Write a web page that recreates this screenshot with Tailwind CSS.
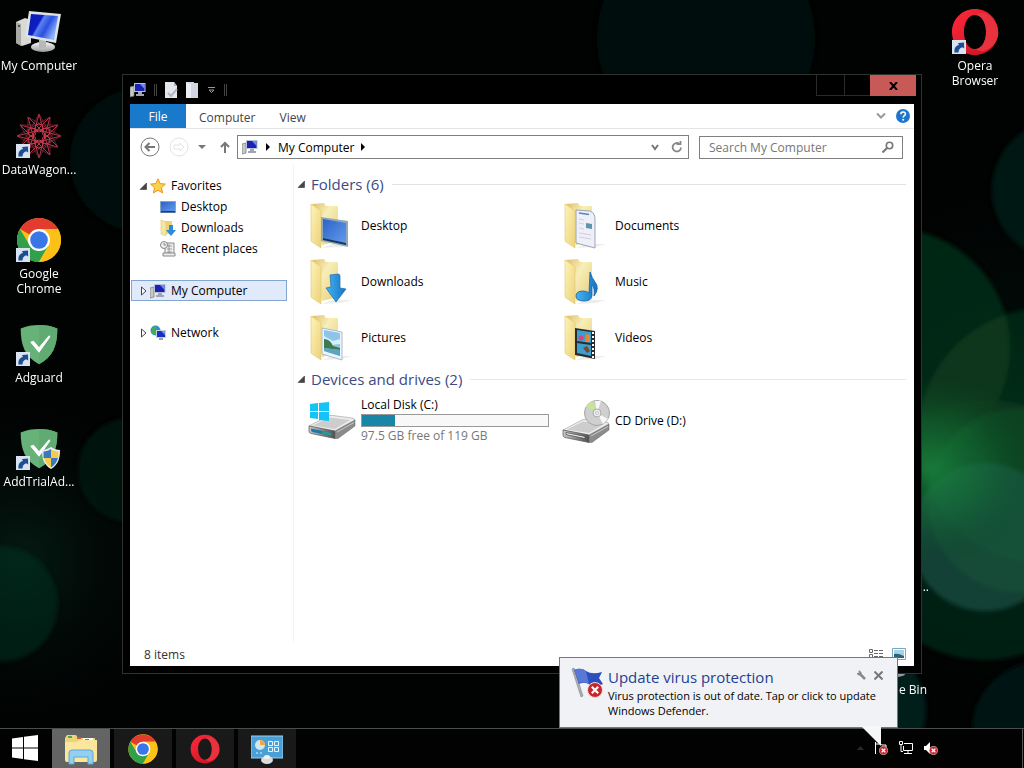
<!DOCTYPE html>
<html lang="en">
  <head>
    <meta charset="UTF-8" />
    <meta name="viewport" content="width=device-width, initial-scale=1.0" />
    <title>My Computer</title>
    <script src="https://cdn.jsdelivr.net/npm/@tailwindcss/browser@4"></script>
  </head>
  <body
    class="flex h-screen flex-col overflow-hidden bg-black font-['Open_Sans','Noto_Sans',sans-serif] text-[12px] leading-[15px] text-black"
  >
    <!-- Shared icons -->
    <svg class="absolute h-0 w-0" aria-hidden="true">
      <defs>
        <linearGradient id="g-screen" x1="0" y1="0" x2="1" y2=".5">
          <stop offset="0" stop-color="#0a1cae" />
          <stop offset=".42" stop-color="#0d1fc4" />
          <stop offset=".48" stop-color="#5b82f0" />
          <stop offset=".7" stop-color="#2a50e0" />
          <stop offset="1" stop-color="#8fb4fb" />
        </linearGradient>
        <linearGradient id="g-metal" x1="0" y1="0" x2="0" y2="1">
          <stop offset="0" stop-color="#f6f6f6" />
          <stop offset="1" stop-color="#9b9b9b" />
        </linearGradient>
        <linearGradient id="g-front" x1="0" y1="0" x2="1" y2="0">
          <stop offset="0" stop-color="#c9c9c9" />
          <stop offset=".6" stop-color="#7d7d7d" />
          <stop offset="1" stop-color="#4f4f4f" />
        </linearGradient>
        <linearGradient id="g-folder" x1="0" y1="0" x2="1" y2="1">
          <stop offset="0" stop-color="#fdf3b8" />
          <stop offset="1" stop-color="#ecd27a" />
        </linearGradient>
        <linearGradient id="g-back" x1="0" y1="0" x2="1" y2="1">
          <stop offset="0" stop-color="#dcc06c" />
          <stop offset=".4" stop-color="#f8eeb8" />
          <stop offset="1" stop-color="#e6cd78" />
        </linearGradient>
        <linearGradient id="g-blue" x1="0" y1="0" x2="1" y2="1">
          <stop offset="0" stop-color="#2f62c4" />
          <stop offset="1" stop-color="#5f9bee" />
        </linearGradient>
        <linearGradient id="g-arrow" x1="0" y1="0" x2="1" y2="0">
          <stop offset="0" stop-color="#45b4f2" />
          <stop offset="1" stop-color="#1573c4" />
        </linearGradient>
        <linearGradient id="g-opera" x1="0" y1="0" x2="1" y2="1">
          <stop offset="0" stop-color="#ff2a3c" />
          <stop offset="1" stop-color="#c3101f" />
        </linearGradient>
      </defs>
      <symbol id="i-pc" viewBox="0 0 48 48">
        <path d="M1 14l9-4 6 2v23l-9 3-6-3z" fill="#d9d9d6" />
        <path d="M1 14l5 2v22l-5-3z" fill="#a8a8a4" />
        <circle cx="4" cy="18" r="1" fill="#333" />
        <ellipse cx="28" cy="39" rx="12" ry="5" fill="url(#g-metal)" />
        <path d="M24 32h7v8h-7z" fill="#b8b8b8" />
        <path d="M14 3l32 3-5 29-31-6z" fill="#dfe3e8" />
        <path d="M16 6l27 2-4 24-26-5z" fill="url(#g-screen)" />
      </symbol>
      <symbol id="i-pc-sm" viewBox="0 0 16 16">
        <path d="M0 5l4-1v10l-4 1z" fill="#c6c9c4" stroke="#777" stroke-width=".7" />
        <path d="M4 1h11.500v9H4z" fill="#b9c1d6" />
        <path d="M5 2h9.500v7H5z" fill="#1a22b4" />
        <path d="M10 2h4.500v5z" fill="#6f8df0" />
        <path d="M8 10h4v2h2v2H6v-2h2z" fill="#9fa6b2" />
      </symbol>
      <symbol id="i-chrome" viewBox="0 0 48 48">
        <circle cx="24" cy="24" r="22" fill="#fbc116" />
        <path d="M24 24L5 13a22 22 0 0 1 38 0H24z" fill="#e33b2e" />
        <path d="M5 13l10 17 9.500 5-7 0L24 46A22 22 0 0 1 5 13z" fill="#31a04a" />
        <path d="M33.500 29.500L24 46 17 44l0-12z" fill="#31a04a" />
        <path d="M24 13h19a22 22 0 0 1-19 33l9.500-16.500z" fill="#fbc116" />
        <circle cx="24" cy="24" r="11" fill="#fff" />
        <circle cx="24" cy="24" r="8.800" fill="#3b76e8" />
      </symbol>
      <symbol id="i-opera" viewBox="0 0 48 48">
        <path
          fill-rule="evenodd"
          d="M24 1c13 0 23 10 23 23S37 47 24 47 1 37 1 24 11 1 24 1zm0 6c-7 0-11 8-11 17s4 17 11 17 11-8 11-17S31 7 24 7z"
          fill="url(#g-opera)"
        />
        <path d="M24 7c5-3 10-3 15 1 11 9 11 24 0 32-5 4-10 4-15 1 7 0 11-8 11-17S31 7 24 7z" fill="#e8323e" />
      </symbol>
      <symbol id="i-shield" viewBox="0 0 48 48">
        <path d="M4 7c12-5 28-5 40 0 0 19-5 31-20 39C9 38 4 26 4 7z" fill="#67b279" />
        <path d="M24 3.300c7 0 14 1.300 20 3.700 0 19-5 31-20 39z" fill="#5fab71" />
        <path d="M15 22l3-1 6 7 11-13 1 1-12 17z" fill="#fff" stroke="#fff" />
      </symbol>
      <symbol id="i-uac" viewBox="0 0 20 24">
        <path d="M10 1c3 2 6 3 9 3 0 9-2 15-9 19C3 19 1 13 1 4c3 0 6-1 9-3z" fill="#e8eef6" />
        <path d="M10 3v9H2.500V5.500C5 5.500 8 4.500 10 3zM10 12h7c-1 4-3 7-7 9.500z" fill="#3d78bd" />
        <path d="M10 3v9h7.500V5.500C15 5.500 12 4.500 10 3zM10 12H3c1 4 3 7 7 9.500z" fill="#f5cb4e" />
      </symbol>
      <symbol id="i-shortcut" viewBox="0 0 14 14">
        <path d="M0 0h14v14H0z" fill="#d9e3f1" />
        <path d="M2.500 12.500C2 8 4 5.500 7 5L6 3l6-.5.200 6-2-1.300C8 8 6.500 9.500 6.500 12.500z" fill="#1b4e92" />
      </symbol>
      <symbol id="i-folder" viewBox="0 0 48 48">
        <path d="M24 43l20 0-10 3-20 1z" fill="#000" opacity=".07" />
        <path d="M4 3l12-1 2 3 12 0v35l-16 4z" fill="url(#g-back)" />
        <path d="M3 3l9 6c1 .6 1 1 1 2v36L4 41c-1-.6-1-1-1-2z" fill="url(#g-folder)" stroke="#e2c86c" stroke-width=".6" />
      </symbol>
      <symbol id="i-tri-open" viewBox="0 0 8 8">
        <path d="M7.500 1v6.500H1z" fill="#444" stroke="#222" stroke-width=".5" />
      </symbol>
      <symbol id="i-tri-closed" viewBox="0 0 8 10">
        <path d="M1.500 1l4.500 4-4.500 4z" fill="#fff" stroke="#444" />
      </symbol>
      <symbol id="i-error" viewBox="0 0 16 16">
        <circle cx="8" cy="8" r="7.500" fill="#c9262c" stroke="#f3d9d9" />
        <path d="M4.800 4.800l6.400 6.400M11.200 4.800l-6.400 6.400" stroke="#fff" stroke-width="2.200" />
      </symbol>
      <symbol id="i-drive" viewBox="0 0 48 26">
        <path d="M1 13L20 3q2-1 5-.5l19 2.500q3 .5 3 2.500L27 19z" fill="#ececec" stroke="#9a9a9a" stroke-width=".6" />
        <path d="M5 12.500L21 4.500l21 2.500-15 9z" fill="#cdcdcd" />
        <path d="M1 13l26 5v7.500L3 20.500q-2-.5-2-2.500z" fill="url(#g-front)" stroke="#555" stroke-width=".7" />
        <path d="M27 18L47 7v6L30 25.500h-3z" fill="#8b8b8b" stroke="#666" stroke-width=".5" />
        <path d="M29 19l17-9.500" stroke="#c9c9c9" />
      </symbol>
    </svg>

    <main class="relative flex flex-1 items-start justify-between">
      <!-- Wallpaper -->
      <svg
        class="absolute inset-0 h-full w-full"
        viewBox="0 0 1024 728"
        preserveAspectRatio="xMidYMid slice"
        aria-hidden="true"
      >
        <defs>
          <radialGradient id="glow">
            <stop offset="0" stop-color="#1c8a42" stop-opacity=".8" />
            <stop offset=".5" stop-color="#167a3a" stop-opacity=".4" />
            <stop offset="1" stop-color="#0c4a25" stop-opacity="0" />
          </radialGradient>
          <radialGradient id="haze">
            <stop offset="0" stop-color="#052619" stop-opacity=".7" />
            <stop offset="1" stop-color="#010504" stop-opacity="0" />
          </radialGradient>
          <filter id="soft"><feGaussianBlur stdDeviation="2" /></filter>
        </defs>
        <path d="M0 0h1024v728H0z" fill="#010303" />
        <ellipse cx="20" cy="560" rx="170" ry="170" fill="url(#haze)" />
        <ellipse cx="1010" cy="440" rx="240" ry="270" fill="url(#haze)" />
        <g filter="url(#soft)">
          <circle cx="706" cy="38" r="109" fill="#020e08" />
          <circle cx="142" cy="160" r="72" fill="#031007" />
          <circle cx="130" cy="470" r="52" fill="#031a0e" opacity=".6" />
          <circle cx="0" cy="604" r="58" fill="#083322" opacity=".5" />
          <circle cx="1062" cy="190" r="70" fill="#06281a" opacity=".6" />
          <circle cx="985" cy="530" r="130" fill="#093222" opacity=".6" />
          <circle cx="890" cy="348" r="120" fill="#07301d" opacity=".8" />
          <circle cx="1046" cy="436" r="128" fill="#0e4824" opacity=".45" />
          <circle cx="1020" cy="500" r="92" fill="#11602f" opacity=".35" />
          <circle cx="985" cy="537" r="74" fill="#1b5f4e" opacity=".55" />
          <circle cx="1040" cy="730" r="68" fill="#04151b" opacity=".8" />
          <circle cx="860" cy="710" r="66" fill="#05241f" opacity=".8" />
        </g>
        <ellipse cx="930" cy="468" rx="110" ry="95" fill="url(#glow)" />
      </svg>

      <ul class="relative text-center text-white">
        <li class="h-[104px] w-[78px]">
          <a href="#" class="flex flex-col items-center gap-[2px] pt-2">
            <svg class="h-12 w-12"><use href="#i-pc" /></svg>
            My Computer
          </a>
        </li>
        <li class="h-[104px] w-[78px]">
          <a href="#" class="flex flex-col items-center gap-[2px] pt-2">
            <span class="relative">
              <svg class="h-12 w-12" viewBox="0 0 48 48" fill="none" stroke="#b83448">
                <path d="M46 24L5 35 35 5 24 46 13 5 43 35 2 24 43 13 13 43 24 2 35 43 5 13z" />
                <path d="M46 24L13 43V5zM35 43L2 24 35 5zM24 46L5 13h38zM24 2l19 33H5z" stroke="#93283a" stroke-width=".7" />
                <g stroke="#c93a4e" stroke-width=".9">
                  <circle cx="24" cy="16" r="4" />
                  <circle cx="31" cy="20" r="4" />
                  <circle cx="31" cy="28" r="4" />
                  <circle cx="24" cy="32" r="4" />
                  <circle cx="17" cy="28" r="4" />
                  <circle cx="17" cy="20" r="4" />
                </g>
              </svg>
              <svg class="absolute bottom-[2px] left-px h-[14px] w-[14px]"><use href="#i-shortcut" /></svg>
            </span>
            DataWagon...
          </a>
        </li>
        <li class="h-[104px] w-[78px]">
          <a href="#" class="flex flex-col items-center gap-[2px] pt-2">
            <span class="relative">
              <svg class="h-12 w-12"><use href="#i-chrome" /></svg>
              <svg class="absolute bottom-[2px] left-px h-[14px] w-[14px]"><use href="#i-shortcut" /></svg>
            </span>
            <span>Google<br />Chrome</span>
          </a>
        </li>
        <li class="h-[104px] w-[78px]">
          <a href="#" class="flex flex-col items-center gap-[2px] pt-2">
            <span class="relative">
              <svg class="h-12 w-12 p-[2px]"><use href="#i-shield" /></svg>
              <svg class="absolute bottom-[2px] left-px h-[14px] w-[14px]"><use href="#i-shortcut" /></svg>
            </span>
            Adguard
          </a>
        </li>
        <li class="h-[104px] w-[78px]">
          <a href="#" class="flex flex-col items-center gap-[2px] pt-2">
            <span class="relative">
              <svg class="h-12 w-12 p-[2px]"><use href="#i-shield" /></svg>
              <svg class="absolute bottom-[2px] left-px h-[14px] w-[14px]"><use href="#i-shortcut" /></svg>
              <svg class="absolute right-[2px] bottom-[2px] h-6 w-5"><use href="#i-uac" /></svg>
            </span>
            AddTrialAd...
          </a>
        </li>
      </ul>

      <a href="#" class="relative mr-[10px] flex w-[78px] flex-col items-center gap-[2px] pt-2 text-center text-white">
        <span class="relative">
          <svg class="h-12 w-12"><use href="#i-opera" /></svg>
          <svg class="absolute bottom-[2px] left-px h-[14px] w-[14px]"><use href="#i-shortcut" /></svg>
        </span>
        <span>Opera<br />Browser</span>
      </a>

      <!-- Icons partly behind the window -->
      <span class="absolute right-[95px] bottom-[134px] text-white">..</span>
      <a href="#" class="absolute right-[97px] bottom-[31px] flex flex-col items-center gap-[2px] text-white">
        <svg class="h-12 w-12" viewBox="0 0 48 48">
          <path d="M10 6l28-2-5 38q-9 5-18 0z" fill="#6d777c" />
          <ellipse cx="24" cy="42" rx="9" ry="3" fill="#8f989c" />
        </svg>
        Recycle Bin
      </a>

      <!-- Explorer window -->
      <section
        class="absolute top-[74px] right-[102px] bottom-[54px] left-[122px] flex flex-col border border-[#2e332f] bg-black px-[7px] pb-[7px]"
      >
        <header class="flex h-[29px] items-start">
          <div class="flex h-[29px] items-center gap-2">
            <svg class="h-4 w-4"><use href="#i-pc-sm" /></svg>
            <span class="h-3 w-[3px] border-x border-[#444]"></span>
            <button aria-label="Properties" class="-ml-[2px]">
              <svg class="h-4 w-4" viewBox="0 0 16 16">
                <path d="M2 0h9l3 4v12H2z" fill="#e4e6ee" />
                <path d="M11 0v4h3z" fill="#aeb3c2" />
                <path d="M5 11l3 3 6-7" fill="none" stroke="#b3b7c4" stroke-width="2" />
              </svg>
            </button>
            <button aria-label="New folder" class="-ml-[3px]">
              <svg class="h-4 w-4" viewBox="0 0 16 16">
                <path d="M2 0h8v1h4v15H2z" fill="#d3d6e2" />
                <path d="M2 0l5 2v14H2z" fill="#eceef5" />
              </svg>
            </button>
            <button aria-label="Customize Quick Access Toolbar">
              <svg class="h-2 w-2" viewBox="0 0 8 8" fill="none" stroke="#999">
                <path d="M0 1.500h7M1 4l2.500 2.500L6 4z" />
              </svg>
            </button>
            <span class="h-3 w-[3px] border-x border-[#444]"></span>
          </div>
          <div class="-mr-[2px] ml-auto flex h-[21px]">
            <button aria-label="Minimize" class="w-[28px] border-b border-l border-[#2a2a2a]"></button>
            <button aria-label="Maximize" class="w-[26px] border-b border-l border-[#2a2a2a]"></button>
            <button aria-label="Close" class="flex w-[46px] items-center justify-center bg-[#c75a56]">
              <svg class="h-2 w-[9px]" viewBox="0 0 9 8" stroke="#000" stroke-width="2">
                <path d="M1 0l7 8M8 0L1 8" />
              </svg>
            </button>
          </div>
        </header>

        <div class="flex min-h-0 flex-1 flex-col bg-white">
          <div class="flex h-[25px] border-b border-[#e3e4e6] text-[#444]">
            <button class="w-14 bg-[#1979ca] text-white">File</button>
            <button class="px-[13px] pt-[2px]">Computer</button>
            <button class="px-[11px] pt-[2px]">View</button>
            <button aria-label="Expand ribbon" class="ml-auto">
              <svg class="h-2 w-[10px]" viewBox="0 0 10 8" fill="none" stroke="#999" stroke-width="2">
                <path d="M1 1.500l4 4 4-4" />
              </svg>
            </button>
            <button aria-label="Help" class="mr-1 ml-[10px]">
              <svg class="h-[14px] w-[14px]" viewBox="0 0 14 14">
                <circle cx="7" cy="7" r="7" fill="#1d76cc" />
                <path d="M4.800 5.300c0-3 4.600-3 4.600-.4 0 1.800-2.200 1.700-2.200 3.500" fill="none" stroke="#fff" stroke-width="1.600" />
                <circle cx="7.200" cy="10.800" r="1" fill="#fff" />
              </svg>
            </button>
          </div>

          <div class="flex h-9 items-center pr-[11px] pl-[10px]">
            <button aria-label="Back">
              <svg class="h-5 w-5" viewBox="0 0 20 20" fill="none" stroke="#777">
                <circle cx="10" cy="10" r="9" />
                <path d="M15 10H6M9.500 6L5.500 10l4 4" stroke-width="2" />
              </svg>
            </button>
            <button aria-label="Forward" class="ml-[9px]">
              <svg class="h-5 w-5" viewBox="0 0 20 20" fill="none" stroke="#e4e4e4">
                <circle cx="10" cy="10" r="9" />
                <path d="M5 8h6V6l4 4-4 4v-2H5z" />
              </svg>
            </button>
            <button aria-label="Recent locations" class="ml-[9px]">
              <svg class="h-1 w-2" viewBox="0 0 8 4"><path d="M0 0h8L4 4z" fill="#777" /></svg>
            </button>
            <button aria-label="Up" class="ml-[14px]">
              <svg class="h-3 w-[10px]" viewBox="0 0 10 12" fill="none" stroke="#777" stroke-width="2">
                <path d="M5 12V2M1 6l4-4 4 4" />
              </svg>
            </button>
            <nav class="ml-[7px] flex h-6 flex-1 items-center border border-[#808080] px-[4px]">
              <svg class="h-4 w-4"><use href="#i-pc-sm" /></svg>
              <svg class="ml-2 h-2 w-1" viewBox="0 0 4 8"><path d="M0 0l4 4-4 4z" /></svg>
              <a href="#" class="ml-2">My Computer</a>
              <svg class="ml-[7px] h-2 w-1" viewBox="0 0 4 8"><path d="M0 0l4 4-4 4z" /></svg>
              <button aria-label="Previous locations" class="ml-auto">
                <svg class="h-2 w-2" viewBox="0 0 8 8" fill="none" stroke="#777" stroke-width="2">
                  <path d="M1 2l3 4 3-4" />
                </svg>
              </button>
              <button aria-label="Refresh" class="mr-px ml-3">
                <svg class="h-3 w-3" viewBox="0 0 12 12" fill="none" stroke="#888" stroke-width="1.800">
                  <path d="M8.500 3A4.200 4.200 0 1 0 10 6.500" />
                  <path d="M5.500 3h4V0" />
                </svg>
              </button>
            </nav>
            <label class="ml-[10px] flex h-[23px] w-[204px] items-center border border-[#808080] pr-2 pl-[9px]">
              <input
                type="text"
                aria-label="Search My Computer"
                placeholder="Search My Computer"
                class="min-w-0 flex-1 outline-none placeholder:text-[#777]"
              />
              <svg class="h-3 w-3" viewBox="0 0 12 12" fill="none" stroke="#777">
                <circle cx="7.500" cy="4.500" r="3.200" stroke-width="1.600" />
                <path d="M5 7l-4.500 4.500" stroke-width="2" />
              </svg>
            </label>
          </div>

          <div class="flex min-h-0 flex-1">
            <nav class="w-[164px] border-r border-[#f3f3f3] pt-[10px]">
              <ul class="pr-[6px] pl-px">
                <li class="flex h-[21px] items-center pl-2">
                  <svg class="h-2 w-2"><use href="#i-tri-open" /></svg>
                  <svg class="ml-[3px] h-4 w-4" viewBox="0 0 16 16">
                    <path
                      d="M8 .8l2.100 4.800 5.300.5-4 3.500 1.200 5.300L8 12.200l-4.600 2.700 1.200-5.300-4-3.500 5.300-.5z"
                      fill="#fbd24c"
                      stroke="#ef9418"
                    />
                  </svg>
                  <a href="#" class="ml-[5px]">Favorites</a>
                </li>
                <li class="flex h-[21px] items-center pl-[29px]">
                  <svg class="h-4 w-4" viewBox="0 0 16 16">
                    <path d="M0 2h16v12H0z" fill="#88a4cc" />
                    <path d="M1 3h14v9H1z" fill="url(#g-blue)" />
                    <path d="M1 12h14v1.500H1z" fill="#1f3c6e" />
                  </svg>
                  <a href="#" class="ml-[5px]">Desktop</a>
                </li>
                <li class="flex h-[21px] items-center pl-[29px]">
                  <svg class="h-4 w-4" viewBox="0 0 16 16">
                    <path d="M1 1h11v13H1z" fill="#ecd27c" />
                    <path d="M1 0l5 2v14l-5-2z" fill="#f7e6a0" stroke="#d8b95c" stroke-width=".5" />
                    <path d="M9 5h4v5h3l-5 6-5-6h3z" fill="#2b8bd6" />
                  </svg>
                  <a href="#" class="ml-[5px]">Downloads</a>
                </li>
                <li class="flex h-[21px] items-center pl-[29px]">
                  <svg class="h-4 w-4" viewBox="0 0 16 16" fill="#eee" stroke="#888">
                    <path d="M5 2h9v12H5z" />
                    <path d="M7 5h5M7 8h5M7 11h5M9 3v10" stroke-width=".8" />
                    <path d="M3 12h12v3H3z" />
                    <circle cx="4" cy="4" r="3.500" />
                    <path d="M4 2v2h2" />
                  </svg>
                  <a href="#" class="ml-[5px]">Recent places</a>
                </li>
                <li class="mt-[21px] flex h-[21px] items-center border border-[#84a5d0] bg-[#e0eafa] pl-2">
                  <svg class="h-[10px] w-2"><use href="#i-tri-closed" /></svg>
                  <svg class="ml-[2px] h-4 w-4"><use href="#i-pc-sm" /></svg>
                  <a href="#" class="ml-[5px]">My Computer</a>
                </li>
                <li class="mt-[21px] flex h-[21px] items-center pl-[9px]">
                  <svg class="h-[10px] w-2"><use href="#i-tri-closed" /></svg>
                  <svg class="ml-[2px] h-4 w-4" viewBox="0 0 16 16">
                    <circle cx="5.500" cy="5.500" r="5" fill="#2f8ed8" />
                    <path d="M2 3q3-3 5-1L5 5l2 3-3 2-3-3z" fill="#3fae5a" />
                    <path d="M6 5h10v8H6z" fill="#c6cfdf" />
                    <path d="M7 6h8v6H7z" fill="#1a2fc0" />
                    <path d="M11 6h4v4z" fill="#7094f0" />
                    <path d="M9 13h4v2H9z" fill="#98a2b0" />
                  </svg>
                  <a href="#" class="ml-[5px]">Network</a>
                </li>
              </ul>
            </nav>

            <div class="min-w-0 flex-1 pt-[7px] pr-2 pl-[3px]">
              <h2 class="flex h-6 items-center text-[15px] text-[#3c4a86]">
                <svg class="h-2 w-2"><use href="#i-tri-open" /></svg>
                <span class="mr-2 ml-[6px]">Folders (6)</span>
                <span class="h-px flex-1 bg-[#e2e2e2]"></span>
              </h2>
              <ul class="mt-px grid grid-cols-[repeat(auto-fill,254px)] pl-[11px]">
                <li class="flex h-14 items-center gap-[5px]">
                  <svg class="h-12 w-12" viewBox="0 0 48 48">
                    <use href="#i-folder" />
                    <path d="M13 16l27 4v26l-27-6z" fill="#8fa9b8" />
                    <path d="M15 18l23 4v20l-23-5z" fill="url(#g-blue)" />
                    <path d="M15 37l23 5v2l-23-5z" fill="#16345f" />
                  </svg>
                  <a href="#">Desktop</a>
                </li>
                <li class="flex h-14 items-center gap-[5px]">
                  <svg class="h-12 w-12" viewBox="0 0 48 48">
                    <use href="#i-folder" />
                    <path d="M14 9l14 1q5 2 5 8v29l-19-5z" fill="#eeeff7" stroke="#9aa6b6" />
                    <path d="M17 12l10 1.500" stroke="#5b83c0" stroke-width="1.500" />
                    <path d="M24 22l6 1v5l-6-1z" fill="#5e95a8" />
                    <path d="M17 18l5 1M17 22l5 1M17 27l5 1M17 32l12 2M17 36l12 2" stroke="#cfcfe2" />
                  </svg>
                  <a href="#">Documents</a>
                </li>
                <li class="flex h-14 items-center gap-[5px]">
                  <svg class="h-12 w-12" viewBox="0 0 48 48">
                    <use href="#i-folder" />
                    <path d="M22 18l8-1q2 0 2 2v12l6 1-10 13-10-14 5-1z" fill="url(#g-arrow)" stroke="#1a6db0" stroke-width=".7" />
                  </svg>
                  <a href="#">Downloads</a>
                </li>
                <li class="flex h-14 items-center gap-[5px]">
                  <svg class="h-12 w-12" viewBox="0 0 48 48">
                    <use href="#i-folder" />
                    <path
                      d="M28 15q2 6 5 10 5 6-1 14 1-8-2-11v10q0 6-8 6-8 0-8-5t7-5q4 0 6 2z"
                      fill="url(#g-arrow)"
                      stroke="#1a5f9e"
                      stroke-width=".8"
                    />
                  </svg>
                  <a href="#">Music</a>
                </li>
                <li class="flex h-14 items-center gap-[5px]">
                  <svg class="h-12 w-12" viewBox="0 0 48 48">
                    <use href="#i-folder" />
                    <path d="M14 15l20 4v28l-20-6z" fill="#eef5fa" stroke="#a9bccb" />
                    <path d="M16 17l16 3v23l-16-5z" fill="#8cc4ea" />
                    <path d="M16 23l9 5 7-2v5l-16 2z" fill="#d9eef5" />
                    <path d="M16 26q6 0 9 7l7 2v2l-16-2z" fill="#3c7a50" />
                    <path d="M16 35l16 2v6l-16-5z" fill="#5fa3bd" />
                  </svg>
                  <a href="#">Pictures</a>
                </li>
                <li class="flex h-14 items-center gap-[5px]">
                  <svg class="h-12 w-12" viewBox="0 0 48 48">
                    <use href="#i-folder" />
                    <path d="M13 15l20 3v28l-20-4z" fill="#2b2b2b" />
                    <path d="M15 17l14 2v11l-14-2zM15 30l14 2v11l-14-3z" fill="#3c9fd0" />
                    <circle cx="19" cy="25" r="2.500" fill="#d8437a" />
                    <path d="M24 21l4 1v7l-5 0z" fill="#e88a2a" />
                    <path d="M21 35l4-2 3 5-3 2z" fill="#7a4a22" />
                    <path d="M31 19v26" stroke="#fff" stroke-width="2" stroke-dasharray="2 2" />
                  </svg>
                  <a href="#">Videos</a>
                </li>
              </ul>

              <h2 class="mt-[2px] flex h-6 items-center text-[15px] text-[#3c4a86]">
                <svg class="h-2 w-2"><use href="#i-tri-open" /></svg>
                <span class="mr-2 ml-[6px]">Devices and drives (2)</span>
                <span class="h-px flex-1 bg-[#e8e8e8]"></span>
              </h2>
              <ul class="mt-px grid grid-cols-[repeat(auto-fill,254px)] pl-[11px]">
                <li class="flex h-14 items-center gap-[5px]">
                  <svg class="h-12 w-12" viewBox="0 0 48 48">
                    <svg y="17" width="48" height="26"><use href="#i-drive" /></svg>
                    <path d="M3 32.500l21 4.500v3L4 36q-1-.5-1-3z" fill="#1f78a8" />
                    <path d="M14 35l9 2v2.500l-9-2z" fill="#2f9a86" />
                    <path d="M2 8l8-1v8H2zM11 7l10-1v9H11zM2 16h8v7l-8-1zM11 16h10v9l-10-1z" fill="#14c4f4" />
                  </svg>
                  <div class="flex w-[188px] flex-col">
                    <a href="#">Local Disk (C:)</a>
                    <div class="mt-[2px] mb-px h-[13px] border border-[#999] bg-[#f8f8f8]" role="progressbar" aria-label="Used space" aria-valuenow="18">
                      <div class="h-full bg-[#1886a6]" style="width: 18%"></div>
                    </div>
                    <span class="text-[#777]">97.5 GB free of 119 GB</span>
                  </div>
                </li>
                <li class="flex h-14 items-center gap-[5px]">
                  <svg class="h-12 w-12" viewBox="0 0 48 48">
                    <svg y="21" width="48" height="26"><use href="#i-drive" /></svg>
                    <path d="M4 36.500l19 4v2L4 38.500z" fill="#f4f4f4" stroke="#444" stroke-width=".7" />
                    <circle cx="35" cy="17" r="12.500" fill="#cfcfcf" stroke="#a5a5a5" />
                    <path d="M35 17L24 11a12.500 12.500 0 0 1 7-6z" fill="#c8e29a" />
                    <path d="M35 17L33 5h6zM35 17l11 6-5 5z" fill="#f7f7f7" />
                    <circle cx="35" cy="17" r="4" fill="#eee" stroke="#aaa" />
                    <circle cx="35" cy="17" r="1.500" fill="#fff" stroke="#888" stroke-width=".5" />
                  </svg>
                  <a href="#">CD Drive (D:)</a>
                </li>
              </ul>
            </div>
          </div>

          <footer class="flex h-6 items-center gap-2 pr-2 pl-[14px] text-[#333]">
            <span class="mr-auto">8 items</span>
            <button aria-label="Details view">
              <svg class="h-[10px] w-4" viewBox="0 0 16 10" fill="none" stroke="#666">
                <path d="M1.500 .5h3v3h-3zM1.500 5.500h3v3h-3zM6 1.500h4M6 4.500h4M6 7.500h4M11 1.500h4M11 4.500h4M11 7.500h4" />
              </svg>
            </button>
            <button aria-label="Large icons view">
              <svg class="h-3 w-[14px]" viewBox="0 0 14 12">
                <path d="M.5 .5h13v11H.5z" fill="#fff" stroke="#7ba7bd" />
                <path d="M2 2h10v8H2z" fill="#a4d2e8" />
                <path d="M2 6q4-1 10 2v2H2z" fill="#2e6178" />
              </svg>
            </button>
          </footer>
        </div>
      </section>

      <!-- Notification -->
      <aside
        class="absolute right-[126px] bottom-0 flex h-[71px] w-[339px] items-start border border-[#777] bg-[#f0f2f6] pt-[9px] pl-[11px]"
      >
        <svg class="h-8 w-9 shrink-0" viewBox="0 0 36 32">
          <path d="M1 2l2-1 9 28-2 1z" fill="#a9b0b8" stroke="#777" stroke-width=".5" />
          <path d="M3 3q7-3 12 1 6 4 16 1l-3 6 4 6q-8 4-13 1-5-4-11-1z" fill="#2a4fbe" />
          <path d="M3 3q7-3 12 1l3 13q-5-3-10-1z" fill="#5878d4" />
          <svg x="16" y="15" width="16" height="16"><use href="#i-error" /></svg>
        </svg>
        <div class="ml-px min-w-0 flex-1 pr-2">
          <h3 class="text-[15px] leading-[21px] text-[#1f3f93]">Update virus protection</h3>
          <p class="text-[11px] leading-[15px]">
            Virus protection is out of date. Tap or click to update Windows Defender.
          </p>
        </div>
        <div class="absolute top-3 right-[14px] flex gap-2">
          <button aria-label="Notification settings">
            <svg class="h-[10px] w-[10px]" viewBox="0 0 10 10" fill="none" stroke="#888">
              <path d="M3.500 3.500l5.500 5.500" stroke-width="2.500" />
              <path d="M3 .8l.5 2.400L1 3.500Q2.500 6 5 4.500 6 2 3 .8z" fill="#888" />
            </svg>
          </button>
          <button aria-label="Close notification">
            <svg class="h-[9px] w-[9px]" viewBox="0 0 9 9" stroke="#777" stroke-width="2">
              <path d="M.5 .5l8 8M8.500 .5l-8 8" />
            </svg>
          </button>
        </div>
        <svg class="absolute right-4 -bottom-[19px] z-10 h-5 w-5" viewBox="0 0 20 20">
          <path d="M0 0h20v20z" fill="#f6f7f9" />
        </svg>
      </aside>
    </main>

    <!-- Taskbar -->
    <footer class="flex h-10 items-stretch border-t border-[#4c4c4c] bg-[#020202]">
      <button aria-label="Start" class="flex w-[52px] items-center justify-center pb-[2px] pr-[2px]">
        <svg class="h-[26px] w-[26px]" viewBox="0 0 26 26">
          <path d="M0 3.500L11 2v10.500H0zM12 1.800L26 0v12.500H12zM0 13.500h11V24L0 22.500zM12 13.500h14V26l-14-1.800z" fill="#fff" />
        </svg>
      </button>
      <div class="flex gap-1">
        <button aria-label="File Explorer" class="flex w-[58px] items-center justify-center bg-[#646464]">
          <svg class="h-8 w-8" viewBox="0 0 32 32">
            <path d="M0 5l2-3h9l2 3h17v22H0z" fill="#eed37b" />
            <path d="M3 3h4v2H3z" fill="#4aa84f" />
            <path d="M12 4h4v2h-4z" fill="#d9582f" />
            <path d="M18 5h10v4H18z" fill="#fff" />
            <path d="M20 6h4v2h-4z" fill="#4b87d2" />
            <path d="M0 9h12l2-2h18v20q0 2-2 2H2q-2 0-2-2z" fill="#fae79c" />
            <path d="M4 31V20q0-3 3-3h18q3 0 3 3v11h-5v-7H9v7z" fill="#94cff0" stroke="#5aa8d8" />
          </svg>
        </button>
        <button aria-label="Google Chrome" class="flex w-[58px] items-center justify-center bg-[#191919]">
          <svg class="h-8 w-8"><use href="#i-chrome" /></svg>
        </button>
        <button aria-label="Opera Browser" class="flex w-[58px] items-center justify-center bg-[#191919]">
          <svg class="h-[30px] w-[30px]"><use href="#i-opera" /></svg>
        </button>
        <button aria-label="Control Panel" class="flex w-[58px] items-center justify-center bg-[#191919]">
          <svg class="h-8 w-8" viewBox="0 0 32 32">
            <path d="M0 3h32v22H0z" fill="#4a9fd6" stroke="#9bd0ee" />
            <circle cx="9" cy="12" r="5" fill="#cfe6f4" />
            <path d="M9 12V7a5 5 0 0 1 5 5z" fill="#f2a93b" />
            <path d="M17.500 8.500h4v4h-4zM23.500 8.500h4v4h-4zM17.500 14.500h4v4h-4zM23.500 14.500h4v4h-4zM5 20h2M9 20h2" fill="none" stroke="#e6f4fc" />
            <ellipse cx="16" cy="27" rx="6" ry="4" fill="#dcdcdc" />
            <ellipse cx="16" cy="24" rx="3" ry="2" fill="#f3f3f3" />
          </svg>
        </button>
      </div>
      <div class="ml-auto flex items-center gap-[9px] pr-[83px] pb-[2px]">
        <button aria-label="Show hidden icons">
          <svg class="h-1 w-[7px]" viewBox="0 0 7 4"><path d="M0 4l3.500-4L7 4z" fill="#2a2a2a" /></svg>
        </button>
        <button aria-label="Action Center">
          <svg class="h-4 w-4" viewBox="0 0 16 16">
            <path d="M2.500 2v12M3 4h4l2 1h4v5" fill="none" stroke="#fff" />
            <svg x="6" y="6" width="9" height="9"><use href="#i-error" /></svg>
          </svg>
        </button>
        <button aria-label="Network">
          <svg class="h-4 w-4" viewBox="0 0 16 16" fill="none" stroke="#fff">
            <path d="M6 3.500h8.500v7H5.500V6M10 10.500v3M6 13.500h8" />
            <path d="M1.500 1.500h3v3h-3zM3 4.500v7h2" />
          </svg>
        </button>
        <button aria-label="Volume">
          <svg class="h-4 w-4" viewBox="0 0 16 16">
            <path d="M1 6h2l4-4v12l-4-4H1z" fill="#fff" />
            <svg x="6" y="6" width="9" height="9"><use href="#i-error" /></svg>
          </svg>
        </button>
      </div>
      <button aria-label="Show desktop" class="w-[2px] border-l border-[#555]"></button>
    </footer>
  </body>
</html>
